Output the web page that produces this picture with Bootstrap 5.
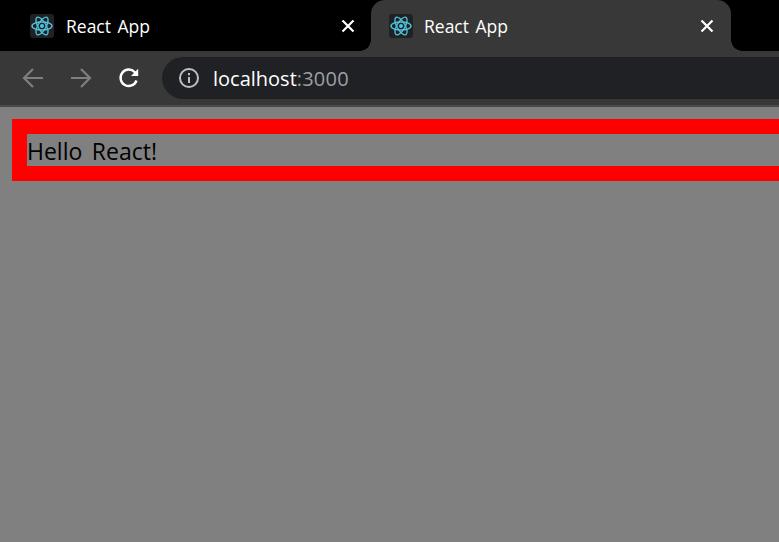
<!DOCTYPE html>
<html lang="en">
<head>
<meta charset="utf-8">
<title>React App</title>
<link href="https://cdn.jsdelivr.net/npm/bootstrap@5.3.0/dist/css/bootstrap.min.css" rel="stylesheet">
<style>
html, body { height: 100%; }
body { background: #808080; overflow: hidden; font-family: "Open Sans", "Noto Sans CJK KR", sans-serif; }
.tabstrip { height: 51px; background: #000; color: #fff; font-size: 17.5px; }
.tabitem { width: 359px; padding-left: 30px; padding-right: 16px; height: 51px; position: relative; }
.tabitem.first { width: 371px; }
.tabitem.active-tab { background: #383838; border-radius: 14px 14px 0 0; padding-left: 18px; padding-right: 17px; width: 360px; }
.tabitem.active-tab::before, .tabitem.active-tab::after { content: ""; position: absolute; bottom: 0; width: 11px; height: 11px; background: radial-gradient(circle at 100% 0, #000 10.5px, #383838 11px); }
.tabitem.active-tab::before { left: -11px; transform: scaleX(-1); }
.tabitem.active-tab::after { right: -11px; }
.favicon { width: 24px; height: 24px; background: #202124; border-radius: 3px; flex: none; }
.tabtitle { margin-left: 12px; line-height: 24px; word-spacing: 2px; }
.active-tab .tabtitle { margin-left: 11px; }
.toolbar { height: 54px; background: #383838; padding-left: 21px; }
.toolbtn { width: 24px; height: 24px; flex: none; margin-right: 24px; }
.omnibox { height: 42px; width: 800px; margin-left: -3px; background: #202124; border-radius: 21px 0 0 21px; padding-left: 16px; font-size: 20px; line-height: 24px; color: #fff; flex: none; }
.omnibox svg { flex: none; }
.hostname { margin-left: 13px; padding-top: 1px; }
.hostport { color: #9aa0a6; letter-spacing: .2px; }
.divider-line { height: 2px; background: #4a4a4a; }
.hello-box { margin: 12px -60px 0 12px; border: 15px solid #f00; height: 62px; font-size: 23px; line-height: 34px; color: #000; word-spacing: 3.5px; }
</style>
</head>
<body>
<div class="tabstrip d-flex">
  <div class="tabitem first d-flex align-items-center">
    <span class="favicon d-flex align-items-center justify-content-center">
      <svg width="22" height="22" viewBox="-11 -11 22 22" fill="none" stroke="#4fc3dc" stroke-width="1.4"><circle r="2" fill="#4fc3dc" stroke="none"/><ellipse rx="10" ry="4"/><ellipse rx="10" ry="4" transform="rotate(60)"/><ellipse rx="10" ry="4" transform="rotate(120)"/></svg>
    </span>
    <span class="tabtitle flex-grow-1">React App</span>
    <svg width="14" height="14" viewBox="0 0 14 14" stroke="#fff" stroke-width="2.2"><path d="M1.5 1.5 12.5 12.5M12.5 1.5 1.5 12.5"/></svg>
  </div>
  <div class="tabitem active-tab d-flex align-items-center">
    <span class="favicon d-flex align-items-center justify-content-center">
      <svg width="22" height="22" viewBox="-11 -11 22 22" fill="none" stroke="#4fc3dc" stroke-width="1.4"><circle r="2" fill="#4fc3dc" stroke="none"/><ellipse rx="10" ry="4"/><ellipse rx="10" ry="4" transform="rotate(60)"/><ellipse rx="10" ry="4" transform="rotate(120)"/></svg>
    </span>
    <span class="tabtitle flex-grow-1">React App</span>
    <svg width="14" height="14" viewBox="0 0 14 14" stroke="#fff" stroke-width="2.2"><path d="M1.5 1.5 12.5 12.5M12.5 1.5 1.5 12.5"/></svg>
  </div>
</div>
<div class="toolbar d-flex align-items-center">
  <svg class="toolbtn" viewBox="0 0 24 24" fill="none" stroke="#7f7f7f" stroke-width="2.2"><path d="M22 12H3M12 3l-9 9 9 9"/></svg>
  <svg class="toolbtn" viewBox="0 0 24 24" fill="none" stroke="#7f7f7f" stroke-width="2.2"><path d="M2 12h19M12 3l9 9-9 9"/></svg>
  <svg class="toolbtn" viewBox="0 0 24 24" fill="none" stroke="#fff" stroke-width="2.4"><path d="M19.5 14.5A8.2 8.2 0 1 1 17.8 6.2L20.5 9"/><path d="M21.2 2.8V10h-7.2z" fill="#fff" stroke="none"/></svg>
  <div class="omnibox d-flex align-items-center">
    <svg width="22" height="22" viewBox="0 0 22 22" fill="none" stroke="#bdc1c6" stroke-width="2"><circle cx="11" cy="11" r="9"/><path d="M11 10v6M11 6v2.2"/></svg>
    <span class="hostname">localhost<span class="hostport">:3000</span></span>
  </div>
</div>
<div class="divider-line"></div>
<div class="hello-box">Hello React!</div>
</body>
</html>
